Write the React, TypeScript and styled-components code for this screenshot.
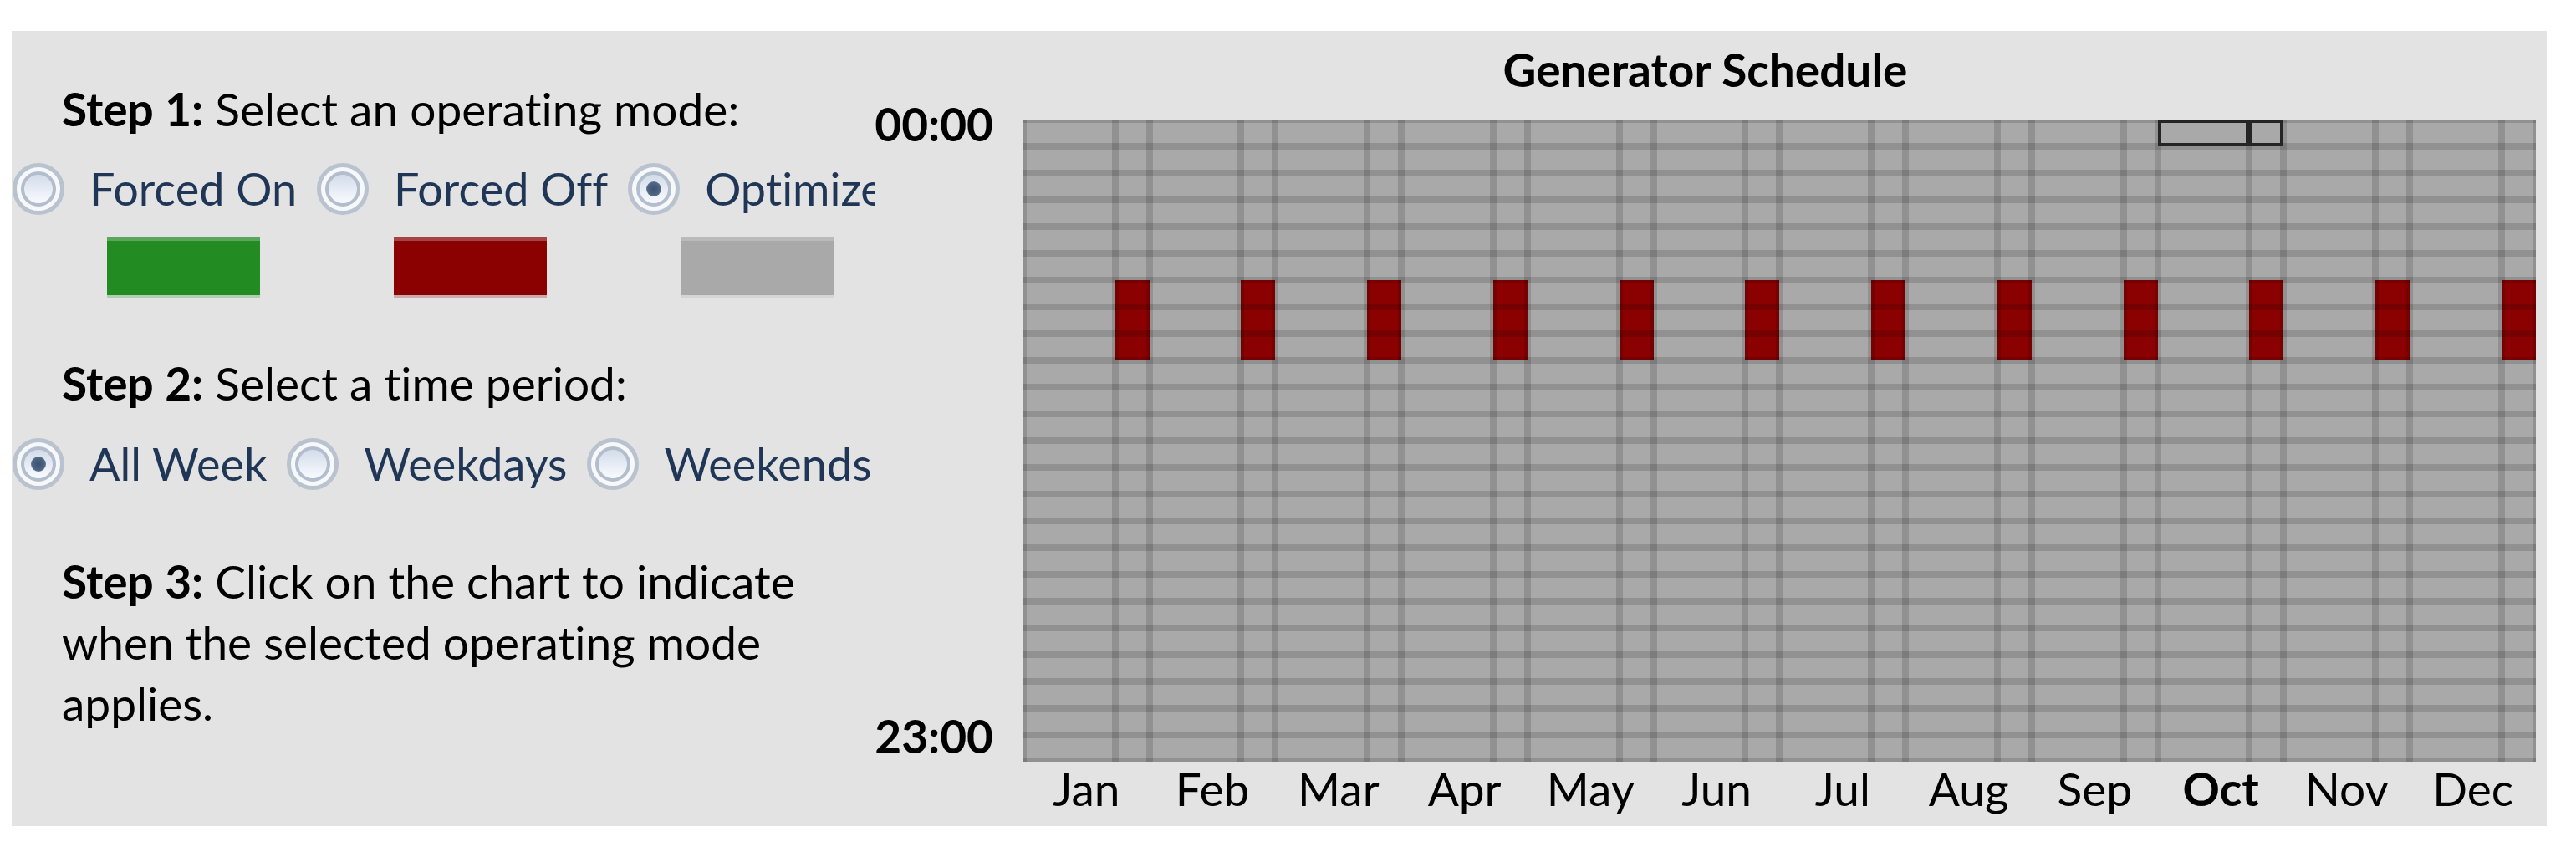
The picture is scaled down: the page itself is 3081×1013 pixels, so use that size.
import React from 'react'
import styled, { createGlobalStyle, css } from 'styled-components'

const GlobalStyle = createGlobalStyle`
  html, body {
    margin: 0;
    background: #ffffff;
  }

  body {
    font-family: Lato, "Open Sans", sans-serif;
    font-size: 55px;
    font-variant-ligatures: none;
    color: #000000;
  }
`

type Mode = 'on' | 'off' | 'optimize'

const MONTHS = ['Jan', 'Feb', 'Mar', 'Apr', 'May', 'Jun', 'Jul', 'Aug', 'Sep', 'Oct', 'Nov', 'Dec']
const HOURS = Array.from({ length: 24 }, (_, h) => h)
const CURRENT_MONTH = 9
const HOVER_HOUR = 0

// weekend hours 06:00 - 08:00 are forced off all year
const modeFor = (hour: number, weekend: boolean): Mode => (weekend && hour >= 6 && hour <= 8 ? 'off' : 'optimize')

const MODE_COLORS: Record<Mode, string> = {
  on: '#228b22',
  off: '#8b0000',
  optimize: '#a9a9a9',
}

const Page = styled.div`
  padding: 37px 35px 25px 14px;
`

const Panel = styled.div`
  display: grid;
  grid-template-columns: 1032px 1fr;
  width: 3032px;
  height: 951px;
  background: #e3e3e3;
`

const Controls = styled.div`
  overflow: hidden;
  padding-top: 57px;
`

const StepText = styled.p<{ $gap?: number }>`
  margin: ${(p) => p.$gap ?? 0}px 0 0;
  padding-left: 60px;
  max-width: 920px;
  line-height: 73px;

  b {
    font-weight: 700;
  }
`

const RadioGroup = styled.div<{ $gap: number }>`
  display: flex;
  gap: 24px;
  margin-top: ${(p) => p.$gap}px;
  padding-left: 1px;
  white-space: nowrap;
`

const RadioItem = styled.label`
  display: flex;
  align-items: center;
  gap: 30px;
  height: 73px;
  font-size: 54px;
  line-height: 73px;
  color: #1f3656;
  flex-shrink: 0;
`

const RadioCircle = styled.span<{ $checked: boolean }>`
  position: relative;
  width: 62px;
  height: 62px;
  box-sizing: border-box;
  border-radius: 50%;
  border: 5px solid #b9c2cf;
  background: #f7f8fa;
  flex-shrink: 0;

  &::after {
    content: '';
    position: absolute;
    inset: 5px;
    border-radius: 50%;
    border: 4px solid #b2bdcd;
    background: linear-gradient(180deg, #d3dcea 0%, #eef2f8 70%, #f8fafd 100%);
  }

  ${(p) =>
    p.$checked &&
    css`
      &::before {
        content: '';
        position: absolute;
        z-index: 1;
        inset: 17px;
        border-radius: 50%;
        background: radial-gradient(circle, #3b5372 0%, #4d6482 55%, #8396af 100%);
      }
    `}
`

const SwatchRow = styled.div`
  display: flex;
  gap: 160px;
  margin-top: 22px;
  padding-left: 114px;
`

const Swatch = styled.div<{ $color: string }>`
  width: 183px;
  height: 65px;
  background: ${(p) => p.$color};
  border-top: 4px solid color-mix(in srgb, ${(p) => p.$color} 70%, #e3e3e3);
  border-bottom: 4px solid color-mix(in srgb, ${(p) => p.$color} 25%, #e3e3e3);
`

const ChartPanel = styled.div`
  padding: 10px 13px 0 0;
`

const Title = styled.h2`
  margin: 0;
  font-size: 55px;
  font-weight: 700;
  line-height: 73px;
  text-align: center;
`

const ChartArea = styled.div`
  display: grid;
  grid-template-columns: 142px 1809px;
  column-gap: 36px;
  row-gap: 5px;
  margin-top: 23px;
`

const AxisLabels = styled.div`
  display: flex;
  flex-direction: column;
  justify-content: space-between;
  align-items: flex-end;
`

const AxisLabel = styled.span<{ $edge: 'top' | 'bottom' }>`
  font-weight: 700;
  line-height: 55px;
  margin-top: ${(p) => (p.$edge === 'top' ? '-22px' : '0')};
  margin-bottom: ${(p) => (p.$edge === 'bottom' ? '3px' : '0')};
`

const ScheduleGrid = styled.div`
  display: grid;
  grid-template-columns: repeat(12, 8fr 3fr);
  grid-template-rows: repeat(24, 32px);
  grid-auto-flow: column;
  cursor: pointer;
`

const gridLine = 'rgba(0, 0, 0, 0.14)'

const Cell = styled.div<{ $mode: Mode; $hover: boolean }>`
  background: ${(p) => MODE_COLORS[p.$mode]};
  box-shadow:
    ${(p) => (p.$hover ? 'inset 0 0 0 4px #252525,' : '')}
    inset 4px 0 0 ${gridLine},
    inset -4px 0 0 ${gridLine},
    inset 0 4px 0 ${gridLine},
    inset 0 -4px 0 ${gridLine};
`

const MonthLabels = styled.div`
  grid-column: 2;
  display: grid;
  grid-template-columns: repeat(12, 1fr);
`

const MonthLabel = styled.span<{ $current: boolean }>`
  text-align: center;
  line-height: 55px;
  font-weight: ${(p) => (p.$current ? 700 : 400)};
`

const OPERATING_MODES: { label: string; mode: Mode }[] = [
  { label: 'Forced On', mode: 'on' },
  { label: 'Forced Off', mode: 'off' },
  { label: 'Optimize', mode: 'optimize' },
]

const PERIODS = ['All Week', 'Weekdays', 'Weekends']

const App = () => {
  const selectedMode: Mode = 'optimize'
  const selectedPeriod = 'All Week'

  return (
    <>
      <GlobalStyle />
      <Page>
        <Panel>
          <Controls>
            <StepText>
              <b>Step 1:</b> Select an operating mode:
            </StepText>
            <RadioGroup $gap={22}>
              {OPERATING_MODES.map(({ label, mode }) => (
                <RadioItem key={mode}>
                  <RadioCircle $checked={mode === selectedMode} />
                  {label}
                </RadioItem>
              ))}
            </RadioGroup>
            <SwatchRow>
              {OPERATING_MODES.map(({ mode }) => (
                <Swatch key={mode} $color={MODE_COLORS[mode]} />
              ))}
            </SwatchRow>

            <StepText $gap={65}>
              <b>Step 2:</b> Select a time period:
            </StepText>
            <RadioGroup $gap={23}>
              {PERIODS.map((period) => (
                <RadioItem key={period}>
                  <RadioCircle $checked={period === selectedPeriod} />
                  {period}
                </RadioItem>
              ))}
            </RadioGroup>

            <StepText $gap={68}>
              <b>Step 3:</b> Click on the chart to indicate when the selected operating mode applies.
            </StepText>
          </Controls>

          <ChartPanel>
            <Title>Generator Schedule</Title>
            <ChartArea>
              <AxisLabels>
                <AxisLabel $edge="top">00:00</AxisLabel>
                <AxisLabel $edge="bottom">23:00</AxisLabel>
              </AxisLabels>
              <ScheduleGrid>
                {MONTHS.map((month, m) =>
                  [false, true].map((weekend) =>
                    HOURS.map((hour) => (
                      <Cell
                        key={`${month}-${weekend}-${hour}`}
                        $mode={modeFor(hour, weekend)}
                        $hover={m === CURRENT_MONTH && hour === HOVER_HOUR}
                      />
                    )),
                  ),
                )}
              </ScheduleGrid>
              <MonthLabels>
                {MONTHS.map((month, m) => (
                  <MonthLabel key={month} $current={m === CURRENT_MONTH}>
                    {month}
                  </MonthLabel>
                ))}
              </MonthLabels>
            </ChartArea>
          </ChartPanel>
        </Panel>
      </Page>
    </>
  )
}

export default App
